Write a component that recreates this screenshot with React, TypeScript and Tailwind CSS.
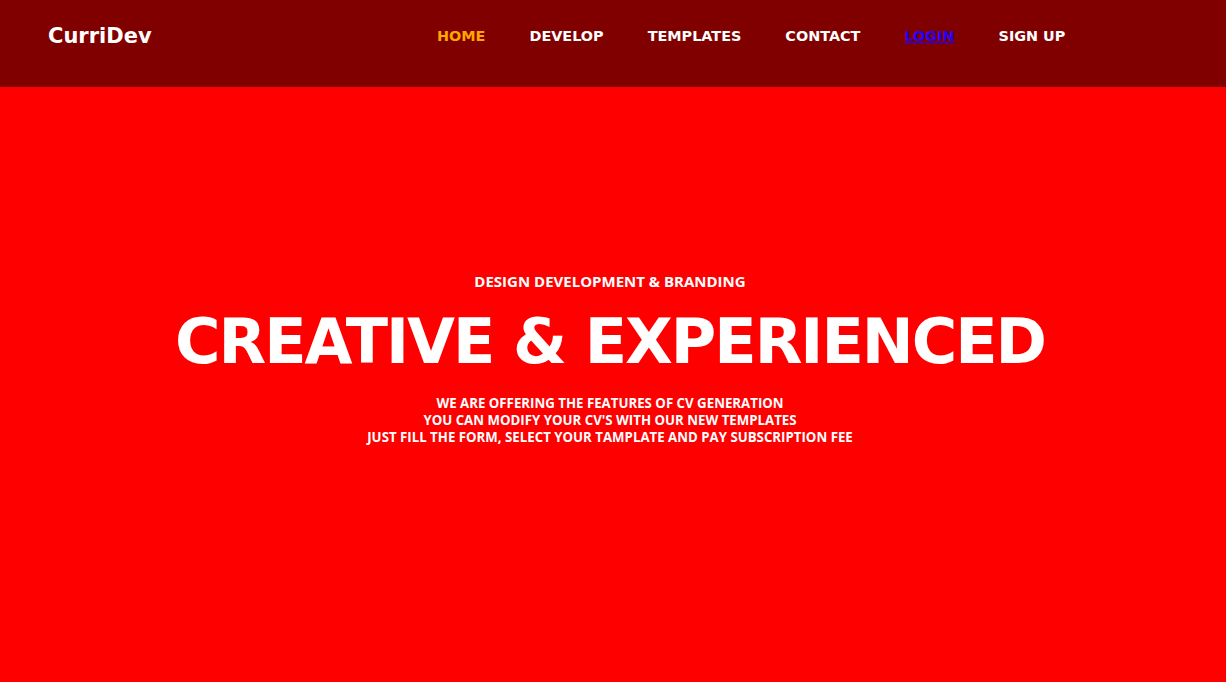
import React from 'react'

const NAV = [
  { label: 'HOME', color: 'text-[#ffa500]' },
  { label: 'DEVELOP', color: 'text-white' },
  { label: 'TEMPLATES', color: 'text-white' },
  { label: 'CONTACT', color: 'text-white' },
  { label: 'LOGIN', color: 'text-[#2200ff] underline' },
  { label: 'SIGN UP', color: 'text-white' },
]

export default function App() {
  return (
    <div className="min-h-[682px] w-full bg-[#ff0000] flex flex-col">
      {/* Header */}
      <header className="h-[87px] bg-[#800000] flex items-start pt-[24px] pl-[48px] font-['DejaVu_Sans',sans-serif]">
        <div className="text-white text-[21px] font-bold leading-[24px] w-[389px]">CurriDev</div>
        <nav className="flex items-center gap-[44px]">
          {NAV.map((n) => (
            <a key={n.label} className={`text-[14.4px] font-bold leading-[24px] ${n.color}`}>
              {n.label}
            </a>
          ))}
        </nav>
      </header>

      {/* Hero */}
      <section className="flex flex-col items-center text-white text-center pt-[185px] pr-[6px]">
        <p className="text-[15px] font-bold leading-[18px] font-['Open_Sans',sans-serif]">
          DESIGN DEVELOPMENT &amp; BRANDING
        </p>
        <h1 className="text-[62px] font-bold leading-[72px] tracking-[-2px] mt-[16px] font-['DejaVu_Sans',sans-serif]">
          CREATIVE &amp; EXPERIENCED
        </h1>
        <div className="mt-[17px] text-[13.25px] font-bold leading-[17px] font-['Open_Sans',sans-serif]">
          <p>WE ARE OFFERING THE FEATURES OF CV GENERATION</p>
          <p>YOU CAN MODIFY YOUR CV'S WITH OUR NEW TEMPLATES</p>
          <p>JUST FILL THE FORM, SELECT YOUR TAMPLATE AND PAY SUBSCRIPTION FEE</p>
        </div>
      </section>
    </div>
  )
}
